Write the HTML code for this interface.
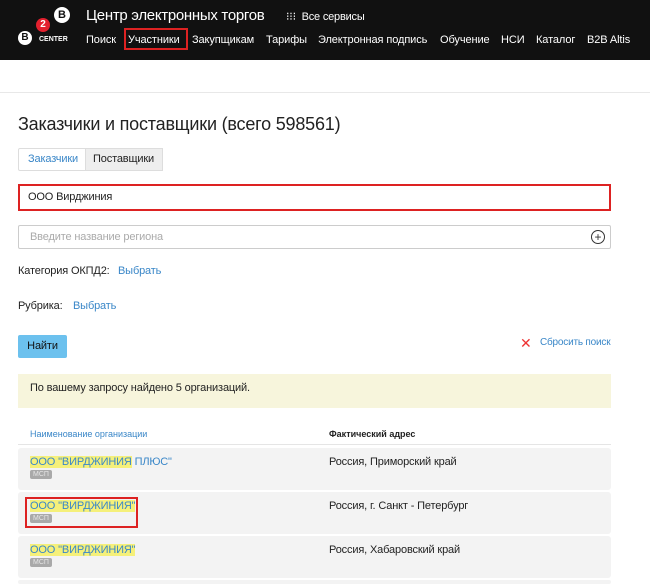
<!DOCTYPE html>
<html style="overflow:hidden"><head><meta charset="utf-8"><style>
html,body{margin:0;width:650px;height:584px;overflow:hidden}
body{background:#fff;font-family:"Liberation Sans",sans-serif;position:relative}
.a{position:absolute;white-space:nowrap}
.hdr{position:absolute;left:0;top:0;width:650px;height:60px;background:#111}
.nav{color:#fff;font-size:11px;letter-spacing:-0.1px}
.blue{color:#3a87c8}
.hl{background:#f5f07a}
.row{position:absolute;left:18px;width:593px;height:42px;background:#f3f3f3;border-radius:3px}
.msp{position:absolute;background:#a9a9a9;color:#e6e6e6;font-size:7px;padding:1px 3px;border-radius:2px}
.t{font-size:11px;letter-spacing:-0.15px}
</style></head><body>
<div class="hdr"></div>
<div class="a" style="left:54px;top:7px;width:16px;height:16px;border-radius:50%;background:#fff;color:#111;font:bold 11px 'Liberation Sans';text-align:center;line-height:16px">B</div>
<div class="a" style="left:36px;top:18px;width:14px;height:14px;border-radius:50%;background:#e3202e;color:#fff;font:bold 10px 'Liberation Sans';text-align:center;line-height:14px">2</div>
<div class="a" style="left:18px;top:31px;width:14px;height:14px;border-radius:50%;background:#fff;color:#111;font:bold 10px 'Liberation Sans';text-align:center;line-height:14px">B</div>
<div class="a" style="left:39px;top:36px;color:#fff;font:bold 7px 'Liberation Sans'">CENTER</div>
<div class="a" style="left:86px;top:7px;color:#fff;font-size:15px;letter-spacing:-0.3px">Центр электронных торгов</div>
<div class="a" style="left:286px;top:10px;color:#fff;font-size:11px;letter-spacing:-0.2px">⁝⁝⁝ &nbsp;Все сервисы</div>
<div class="a nav" style="left:86px;top:34px">Поиск</div>
<div class="a" style="left:124px;top:28px;width:64px;height:22px;border:2px solid #d22;box-sizing:border-box"></div>
<div class="a nav" style="left:128px;top:34px">Участники</div>
<div class="a nav" style="left:192px;top:34px">Закупщикам</div>
<div class="a nav" style="left:266px;top:34px">Тарифы</div>
<div class="a nav" style="left:318px;top:34px">Электронная подпись</div>
<div class="a nav" style="left:440px;top:34px">Обучение</div>
<div class="a nav" style="left:501px;top:34px">НСИ</div>
<div class="a nav" style="left:536px;top:34px">Каталог</div>
<div class="a nav" style="left:587px;top:34px">B2B Altis</div>
<div class="a" style="left:0;top:92px;width:650px;height:1px;background:#e8e8e8"></div>
<div class="a" style="left:18px;top:114px;font-size:18px;letter-spacing:-0.2px;color:#222">Заказчики и поставщики (всего 598561)</div>
<div class="a" style="left:18px;top:148px;width:145px;height:23px;border:1px solid #ddd;box-sizing:border-box;border-radius:2px"></div>
<div class="a" style="left:85px;top:148px;width:78px;height:23px;background:#eee;border:1px solid #ddd;box-sizing:border-box"></div>
<div class="a blue t" style="left:28px;top:153px">Заказчики</div>
<div class="a t" style="left:93px;top:153px;color:#222">Поставщики</div>
<div class="a" style="left:18px;top:184px;width:593px;height:27px;border:2px solid #d22;box-sizing:border-box"></div>
<div class="a t" style="left:28px;top:191px;color:#222">ООО Вирджиния</div>
<div class="a" style="left:18px;top:225px;width:593px;height:24px;border:1px solid #ccc;box-sizing:border-box;border-radius:2px"></div>
<div class="a t" style="left:30px;top:231px;color:#aaa">Введите название региона</div>
<div class="a" style="left:591px;top:230px;width:12px;height:12px;border:1px solid #333;border-radius:50%;font-size:12px;line-height:12px;text-align:center;color:#333">+</div>
<div class="a t" style="left:18px;top:265px;color:#222">Категория ОКПД2:</div>
<div class="a blue t" style="left:118px;top:265px">Выбрать</div>
<div class="a t" style="left:18px;top:300px;color:#222">Рубрика:</div>
<div class="a blue t" style="left:73px;top:300px">Выбрать</div>
<div class="a t" style="left:18px;top:335px;width:49px;height:23px;background:#6cc1ee;border-radius:2px;color:#111;text-align:center;line-height:23px">Найти</div>
<div class="a" style="left:520px;top:335px;color:#e33;font-size:14px">✕</div>
<div class="a blue" style="left:540px;top:337px;font-size:10px;letter-spacing:-0.2px">Сбросить поиск</div>
<div class="a" style="left:18px;top:374px;width:593px;height:34px;background:#f7f5dc"></div>
<div class="a t" style="left:30px;top:382px;color:#222">По вашему запросу найдено 5 организаций.</div>
<div class="a blue" style="left:30px;top:429px;font-size:9px">Наименование организации</div>
<div class="a" style="left:329px;top:429px;font-size:9px;font-weight:bold;color:#222">Фактический адрес</div>
<div class="a" style="left:18px;top:444px;width:593px;height:1px;background:#e5e5e5"></div>
<div class="row" style="top:448px"></div>
<div class="row" style="top:492px"></div>
<div class="row" style="top:536px"></div>
<div class="row" style="top:580px;height:4px"></div>
<div class="a blue t" style="left:30px;top:456px"><span class="hl">ООО "ВИРДЖИНИЯ</span> ПЛЮС"</div>
<div class="msp" style="left:30px;top:470px">МСП</div>
<div class="a t" style="left:329px;top:456px;color:#222">Россия, Приморский край</div>
<div class="a" style="left:25px;top:497px;width:113px;height:31px;border:2px solid #d22;box-sizing:border-box"></div>
<div class="a blue t" style="left:30px;top:500px"><span class="hl">ООО "ВИРДЖИНИЯ"</span></div>
<div class="msp" style="left:30px;top:514px">МСП</div>
<div class="a t" style="left:329px;top:500px;color:#222">Россия, г. Санкт - Петербург</div>
<div class="a blue t" style="left:30px;top:544px"><span class="hl">ООО "ВИРДЖИНИЯ"</span></div>
<div class="msp" style="left:30px;top:558px">МСП</div>
<div class="a t" style="left:329px;top:544px;color:#222">Россия, Хабаровский край</div>
</body></html>
